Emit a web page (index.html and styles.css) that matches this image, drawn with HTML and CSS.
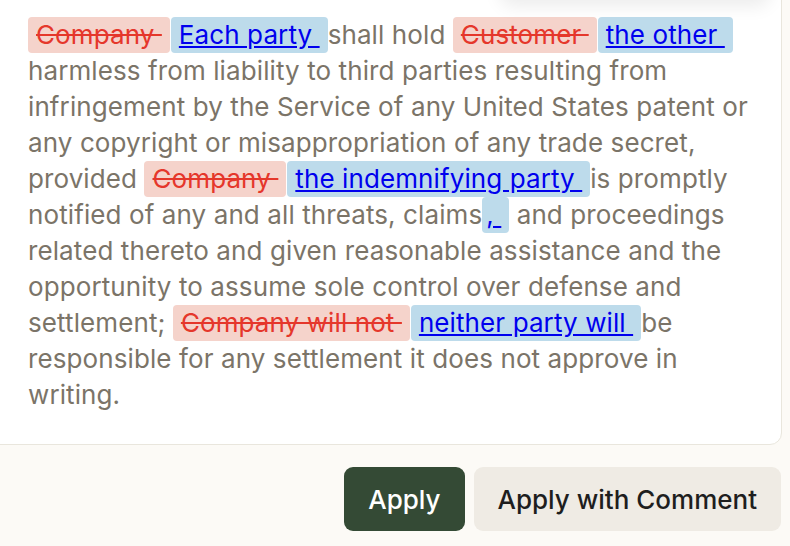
FILE: index.html
```html
<!DOCTYPE html>
<html lang="en">
<head>
    <meta charset="UTF-8">
    <meta name="viewport" content="width=device-width, initial-scale=1.0">
    <title>Suggested Edit</title>
    <link rel="stylesheet" href="styles.css">
</head>
<body>
    <div class="popover-shadow"></div>
    <div class="suggestion-card">
        <p class="clause">
            <del>Company </del><ins>Each party </ins>shall hold <del>Customer </del><ins>the other </ins>harmless from liability to third parties resulting from infringement by the Service of any United States patent or any copyright or misappropriation of any trade secret, provided <del>Company </del><ins>the indemnifying party </ins>is promptly notified of any and all threats, claims<ins class="tight">, </ins> and proceedings related thereto and given reasonable assistance and the opportunity to assume sole control over defense and settlement; <del>Company will not </del><ins>neither party will </ins>be responsible for any settlement it does not approve in writing.
        </p>
    </div>
    <div class="actions">
        <button class="btn btn-primary">Apply</button>
        <button class="btn btn-secondary">Apply with Comment</button>
    </div>
</body>
</html>
```

FILE: styles.css
```css
body {
    margin: 0;
    background-color: #fcfaf6;
    font-family: Inter, "Open Sans", sans-serif;
    overflow: hidden;
}
.popover-shadow {
    position: absolute;
    top: -60px;
    left: 500px;
    width: 270px;
    height: 60px;
    border-radius: 12px;
    background-color: #fff;
    box-shadow: 0 6px 18px rgba(0, 0, 0, 0.08);
}
.suggestion-card {
    margin: -20px 8px 0 -12px;
    padding: 36px 20px 31px 39px;
    background-color: #fff;
    border: 1.5px solid #e9e6dd;
    border-radius: 12px;
}
.clause {
    margin: 0;
    font-size: 26px;
    line-height: 36px;
    letter-spacing: 0.1px;
    color: #7b7468;
}
.clause del,
.clause ins {
    display: inline-block;
    padding: 0 8px;
    border-radius: 4px;
    white-space: pre;
}
.clause del {
    background-color: #f5d3cb;
    color: #e5372b;
    margin-right: 1px;
}
.clause ins {
    background-color: #bddbeb;
    color: #0000ee;
    text-decoration: underline;
}
.clause ins.tight {
    padding-left: 4px;
}
.actions {
    display: flex;
    justify-content: flex-end;
    gap: 9px;
    margin-top: 22px;
    padding-right: 9px;
}
.btn {
    height: 64px;
    padding: 0 24px;
    border: none;
    border-radius: 9px;
    font-family: Inter, "Open Sans", sans-serif;
    font-size: 26px;
    font-weight: 500;
    cursor: pointer;
}
.btn-primary {
    background-color: #344a35;
    color: #fff;
}
.btn-secondary {
    background-color: #efebe4;
    color: #1e1e1e;
}
```
